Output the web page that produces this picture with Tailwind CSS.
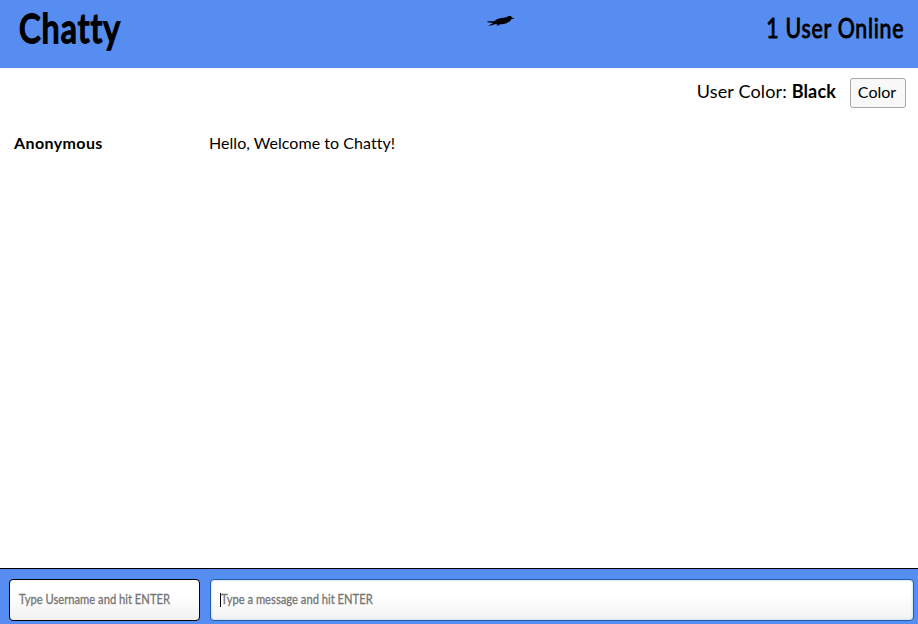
<!DOCTYPE html>
<html lang="en">
<head>
<meta charset="utf-8">
<title>Chatty</title>
<script src="https://cdn.jsdelivr.net/npm/@tailwindcss/browser@4"></script>
</head>
<body class="flex h-screen flex-col overflow-hidden bg-white font-['Lato',sans-serif] text-black">
<header class="grid h-[68px] shrink-0 grid-cols-[467px_28px_1fr] bg-[#578df0] pr-[14px] pl-[19px]">
  <h1 class="origin-left scale-x-[.79] pt-[6px] text-[41px] leading-[44px] font-medium tracking-[1.3px] whitespace-nowrap [font-variant-ligatures:none] [-webkit-text-stroke:1.8px_black]">Chatty</h1>
  <svg class="mt-[15px] h-[12px] w-[28px]" viewBox="0 0 28 12"><path d="M1 6.3 8 6.3 11 4.2 14 3.3 20.5 2.3 22.5 1 25 1 26 2.7 28.5 3 28.5 3.8 25.5 4 24 6.3 20 8.5 16 9.3 13.5 9.2 13.5 10.5H12.5V9.5L11.7 9.7V10.8H10.8V9L8.5 9.3 6.5 10.2 2 10.7 5.5 9 7 8 2 7.2Z"/></svg>
  <p class="origin-right scale-x-[.82] justify-self-end pt-[12px] text-[26px] leading-[32px] font-normal tracking-[.9px] whitespace-nowrap [-webkit-text-stroke:.9px_black]">1 User Online</p>
</header>
<main class="flex-1">
  <div class="flex justify-end pt-[10px] pr-[12px]">
    <p class="mr-[14px] text-[18px] leading-[26px] tracking-[.15px]">User Color: <b>Black</b></p>
    <button class="h-[30px] w-[56px] rounded-[3px] border border-[#a6a6a6] bg-[#f8f8f8] pr-[2px] pb-[2px] text-[16px] leading-[24px]">Color</button>
  </div>
  <div class="mt-[23px] flex pl-[14px] text-[16px] leading-[24px] [font-variant-ligatures:none]">
    <b class="w-[195px] tracking-[.4px]">Anonymous</b>
    <p class="tracking-[.04px]">Hello, Welcome to Chatty!</p>
  </div>
</main>
<footer class="flex h-[56px] shrink-0 gap-[10px] border-t border-black bg-[#578df0] pt-[10px] pr-[4px] pl-[9px] text-[14px] leading-[38px] text-[#747474]">
  <div class="h-[42px] w-[191px] rounded-[4px] border border-black bg-linear-to-b from-white from-40% to-[#f0f0f0] pl-[9px]"><span class="inline-block origin-left scale-x-[.8] whitespace-nowrap [-webkit-text-stroke:.3px_#747474]">Type Username and hit ENTER</span></div>
  <div class="flex h-[42px] flex-1 rounded-[4px] border border-[#285b9d] bg-linear-to-b from-white from-40% to-[#f3f3f3] pl-[9px] shadow-[0_0_7px_#4695ff,inset_0_0_3px_#a9d2ff]"><i class="mt-[13px] h-[14px] w-px bg-black"></i><span class="inline-block origin-left scale-x-[.8] whitespace-nowrap [-webkit-text-stroke:.3px_#747474]">Type a message and hit ENTER</span></div>
</footer>
</body>
</html>
